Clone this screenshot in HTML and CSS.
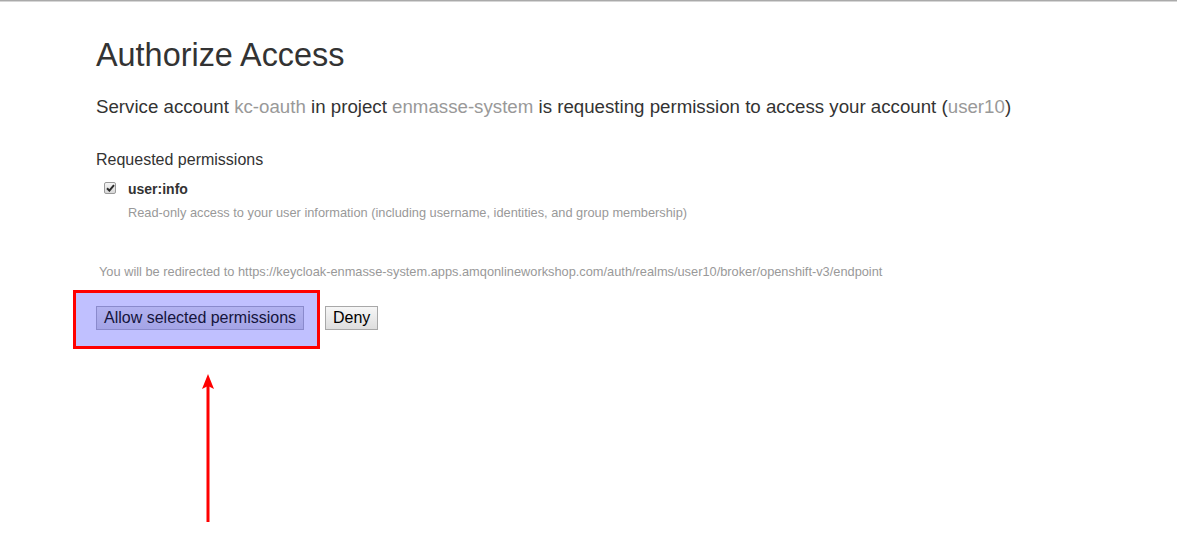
FILE: index.html
```html
<!DOCTYPE html>
<html>
<head>
<meta charset="utf-8">
<link rel="stylesheet" href="styles.css">
</head>
<body>
<div class="topline"></div>
<main class="page">
  <h1 class="title">Authorize Access</h1>
  <p class="lead">Service account <span class="muted">kc-oauth</span> in project <span class="muted">enmasse-system</span> is requesting permission to access your account (<span class="muted">user10</span>)</p>
  <h4 class="section">Requested permissions</h4>
  <div class="perm">
    <span class="check">
      <svg width="9" height="8" viewBox="0 0 9 8"><path d="M1 4.2 L3.4 6.6 L8 1.2" fill="none" stroke="#2b2b2b" stroke-width="2"/></svg>
    </span>
    <div class="perm-body">
      <div class="perm-name">user:info</div>
      <div class="perm-desc">Read-only access to your user information (including username, identities, and group membership)</div>
    </div>
  </div>
  <p class="redirect">You will be redirected to https://keycloak-enmasse-system.apps.amqonlineworkshop.com/auth/realms/user10/broker/openshift-v3/endpoint</p>
  <div class="actions">
    <div class="highlight">
      <button class="btn btn-allow">Allow selected permissions</button>
    </div>
    <button class="btn btn-deny">Deny</button>
  </div>
  <div class="arrow-wrap">
    <svg class="arrow" width="20" height="150" viewBox="0 0 20 150">
      <polygon points="10,0 16,15 10,12 4,15" fill="#ff0000"/>
      <rect x="8.5" y="10" width="3" height="138" fill="#ff0000"/>
    </svg>
  </div>
</main>
</body>
</html>
```
FILE: styles.css
```css
html, body {
  margin: 0;
  padding: 0;
  background: #fff;
}
body {
  font-family: "Liberation Sans", Arial, sans-serif;
  color: #333;
}
.topline {
  height: 1px;
  border-top: 1px solid #aaa;
  background: #d6d6d6;
}
.page {
  padding-left: 96px;
}
.title {
  margin: 0;
  padding-top: 33px;
  font-size: 32.4px;
  font-weight: normal;
  line-height: 40px;
}
.lead {
  margin: 19px 0 0;
  font-size: 18.7px;
  line-height: 26px;
}
.muted {
  color: #999;
}
.section {
  margin: 29px 0 0;
  font-size: 16px;
  font-weight: normal;
  line-height: 22px;
}
.perm {
  display: flex;
  margin-top: 8px;
  padding-left: 8px;
}
.check {
  box-sizing: border-box;
  width: 12px;
  height: 12px;
  margin: 3px 12px 0 0;
  border: 1px solid #9a9a9a;
  border-radius: 2px;
  background: linear-gradient(#f4f4f4, #d8d8d8);
  display: flex;
  align-items: center;
  justify-content: center;
  flex: none;
}
.check svg {
  display: block;
}
.perm-body {
  display: flex;
  flex-direction: column;
}
.perm-name {
  font-size: 14px;
  font-weight: bold;
  line-height: 20px;
}
.perm-desc {
  margin-top: 5px;
  font-size: 12.8px;
  color: #999;
  line-height: 18px;
}
.redirect {
  margin: 41px 0 0 3px;
  font-size: 12.8px;
  color: #999;
  line-height: 18px;
}
.actions {
  display: flex;
  align-items: flex-start;
  margin-top: 9px;
  margin-left: -23px;
}
.highlight {
  box-sizing: border-box;
  width: 247px;
  height: 59px;
  border: 3px solid #ff0000;
  background: #c0c0ff;
  display: flex;
  align-items: flex-start;
  padding-left: 20px;
  padding-top: 13px;
}
.btn {
  font-family: "Liberation Sans", Arial, sans-serif;
  font-size: 16px;
  line-height: 18px;
  padding: 2px 7px;
  border-radius: 0;
  color: #000;
  height: 24px;
  box-sizing: border-box;
}
.btn-allow {
  background: linear-gradient(#b2b2f0, #a4a4e6);
  border: 1px solid #8a8acc;
  color: #14143c;
}
.btn-deny {
  margin-left: 5px;
  margin-top: 16px;
  background: linear-gradient(#f6f6f6, #dedede);
  border: 1px solid #a8a8a8;
}
.arrow-wrap {
  margin-top: 25px;
  padding-left: 102px;
}
.arrow {
  display: block;
}
```
